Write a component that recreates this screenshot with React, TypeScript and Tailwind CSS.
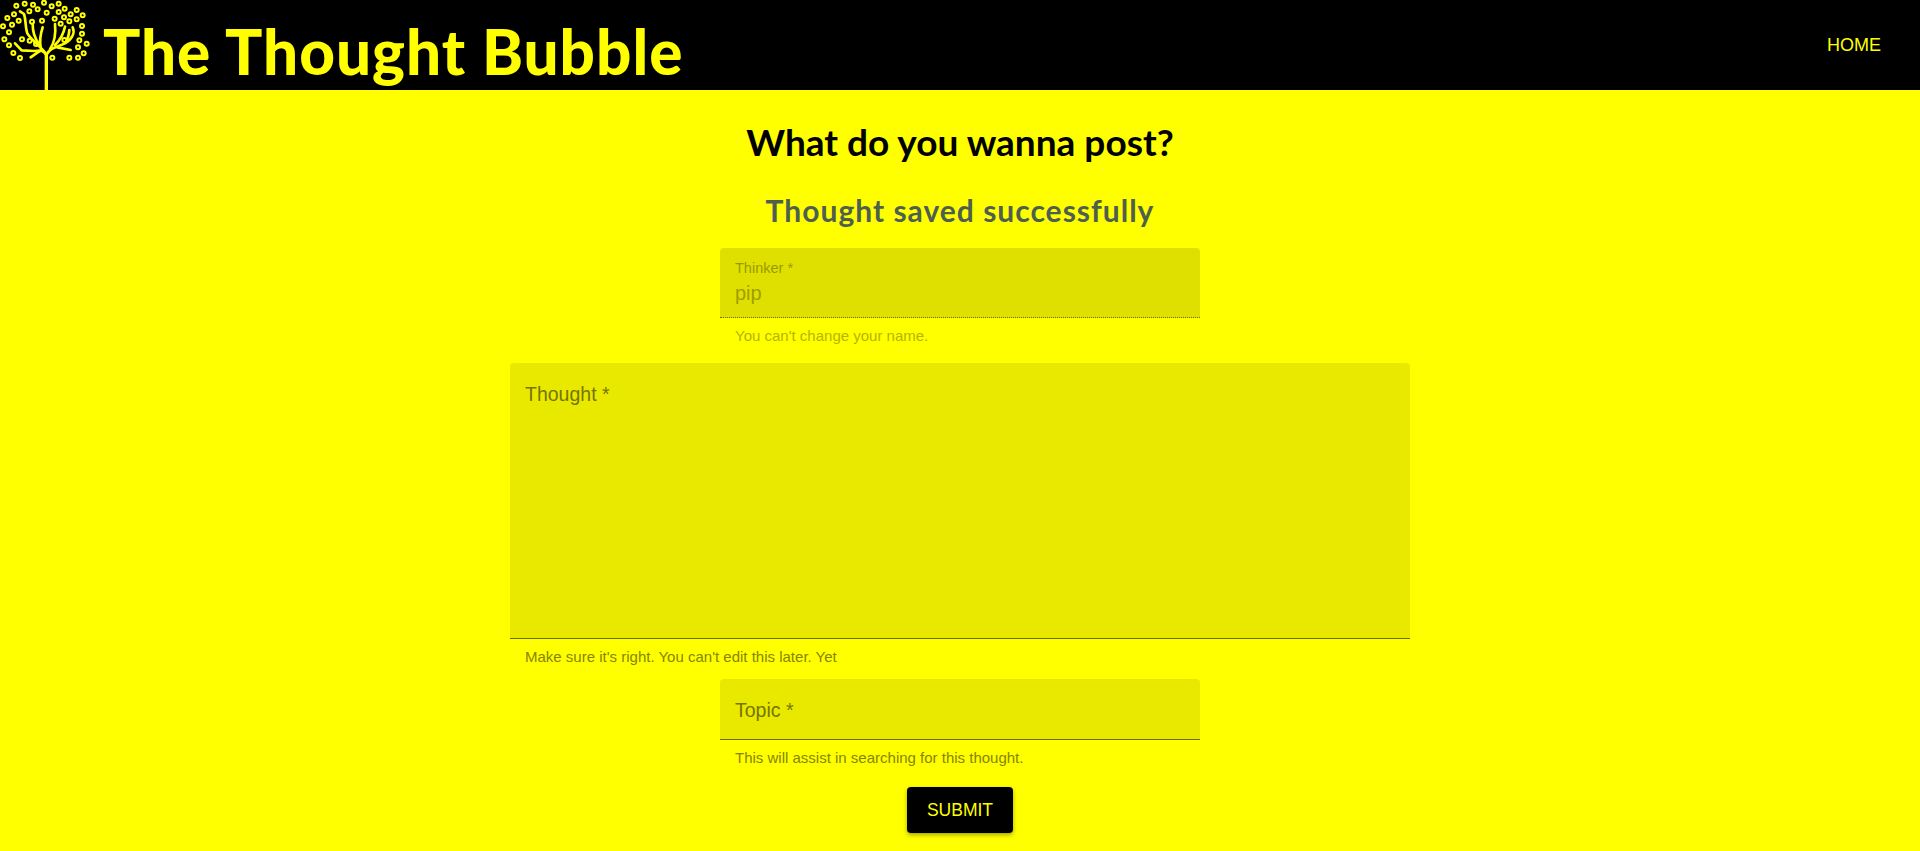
const rings = [
  [49, 17], [74, 11], [99, 14], [132, 8], [155, 19], [176, 11], [194, 26], [230, 30], [212, 43], [248, 46],
  [22, 54], [42, 43], [88, 34], [113, 28], [140, 38], [176, 36], [192, 52], [230, 58], [208, 64], [164, 56],
  [182, 71], [126, 62], [96, 65], [56, 62], [36, 74], [9, 79], [27, 97], [246, 78], [246, 101],
  [13, 118], [66, 118], [89, 122], [108, 132], [193, 120], [238, 121], [260, 131], [27, 136], [234, 142],
  [251, 160], [40, 159], [60, 174], [157, 173], [208, 173], [234, 173],
];

const Logo = () => (
  <svg viewBox="0 0 270 270" className="w-[90px] h-[90px] shrink-0" fill="none" stroke="#ffff00">
    {rings.map(([cx, cy]) => (
      <circle key={`${cx}-${cy}`} cx={cx} cy={cy} r="6" strokeWidth="6" />
    ))}
    <g strokeWidth="8" strokeLinecap="round" strokeLinejoin="round">
      <path d="M139 270 V165" strokeWidth="10" />
      <path d="M60 34 L72 42 C78 60 76 85 82 100 C92 118 118 135 137 160" />
      <path d="M98 72 C98 95 102 112 116 130" />
      <path d="M128 82 C122 100 118 118 122 142" />
      <path d="M45 130 L65 151 L105 153 C120 150 130 150 139 165" />
      <path d="M92 172 L112 158 L125 150" />
      <path d="M218 82 C226 100 215 118 195 130 C175 140 150 142 139 165" />
      <path d="M165 72 C168 100 165 125 150 148" />
      <path d="M195 80 C190 105 180 120 165 135" />
      <path d="M208 90 C208 100 205 110 200 122" />
      <path d="M172 142 L212 150" />
    </g>
  </svg>
);

interface FieldProps {
  label: string;
  helper: string;
  width: string;
  height: string;
  value?: string;
  disabled?: boolean;
}

const Field = ({ label, helper, width, height, value, disabled }: FieldProps) => (
  <div className={width}>
    <div
      className={`${height} rounded-t px-[15px] ${
        disabled
          ? 'bg-[#e0e000] border-b border-dotted border-[#6f6f00] pt-[12px]'
          : 'bg-[#e9e900] border-b border-[#6e6e00] pt-[19px]'
      }`}
    >
      {disabled ? (
        <>
          <div className="text-[14.5px] leading-[17px] text-[#9a9a00]">{label}</div>
          <div className="mt-[4px] text-[20px] leading-[24px] text-[#9e9e00]">{value}</div>
        </>
      ) : (
        <div className="text-[19.5px] leading-[24px] text-[#757500]">{label}</div>
      )}
    </div>
    <p className={`mt-[9px] px-[15px] text-[15px] leading-[17px] ${disabled ? 'text-[#b5b500]' : 'text-[#858500]'}`}>
      {helper}
    </p>
  </div>
);

export default function App() {
  return (
    <div className="min-h-[851px] bg-[#ffff00] font-['Liberation_Sans',Arial,sans-serif]">
      <header className="h-[90px] bg-black flex items-center justify-between overflow-hidden">
        <div className="flex items-center gap-[13px]">
          <Logo />
          <h1 className="pt-[12px] font-['Lato',sans-serif] font-black text-[62px] leading-[78px] tracking-[1px] text-[#ffff00]">
            The Thought Bubble
          </h1>
        </div>
        <a className="mr-[39px] text-[18px] text-[#ffff00]">HOME</a>
      </header>
      <main className="flex flex-col items-center pt-[30px]">
        <h2 className="font-['Lato',sans-serif] font-bold text-[37px] leading-[44px] text-black">
          What do you wanna post?
        </h2>
        <h3 className="mt-[27px] font-['Lato',sans-serif] font-bold text-[30px] leading-[38px] tracking-[1px] text-[#4f5f4f]">
          Thought saved successfully
        </h3>
        <div className="mt-[19px]">
          <Field label="Thinker *" value="pip" helper="You can't change your name." width="w-[480px]" height="h-[70px]" disabled />
        </div>
        <div className="mt-[19px]">
          <Field label="Thought *" helper="Make sure it's right. You can't edit this later. Yet" width="w-[900px]" height="h-[276px]" />
        </div>
        <div className="mt-[14px]">
          <Field label="Topic *" helper="This will assist in searching for this thought." width="w-[480px]" height="h-[61px]" />
        </div>
        <button className="mt-[21px] w-[106px] h-[46px] rounded bg-black text-[17.5px] text-[#ffff00] shadow-[0_2px_4px_rgba(0,0,0,0.35)]">
          SUBMIT
        </button>
      </main>
    </div>
  );
}
